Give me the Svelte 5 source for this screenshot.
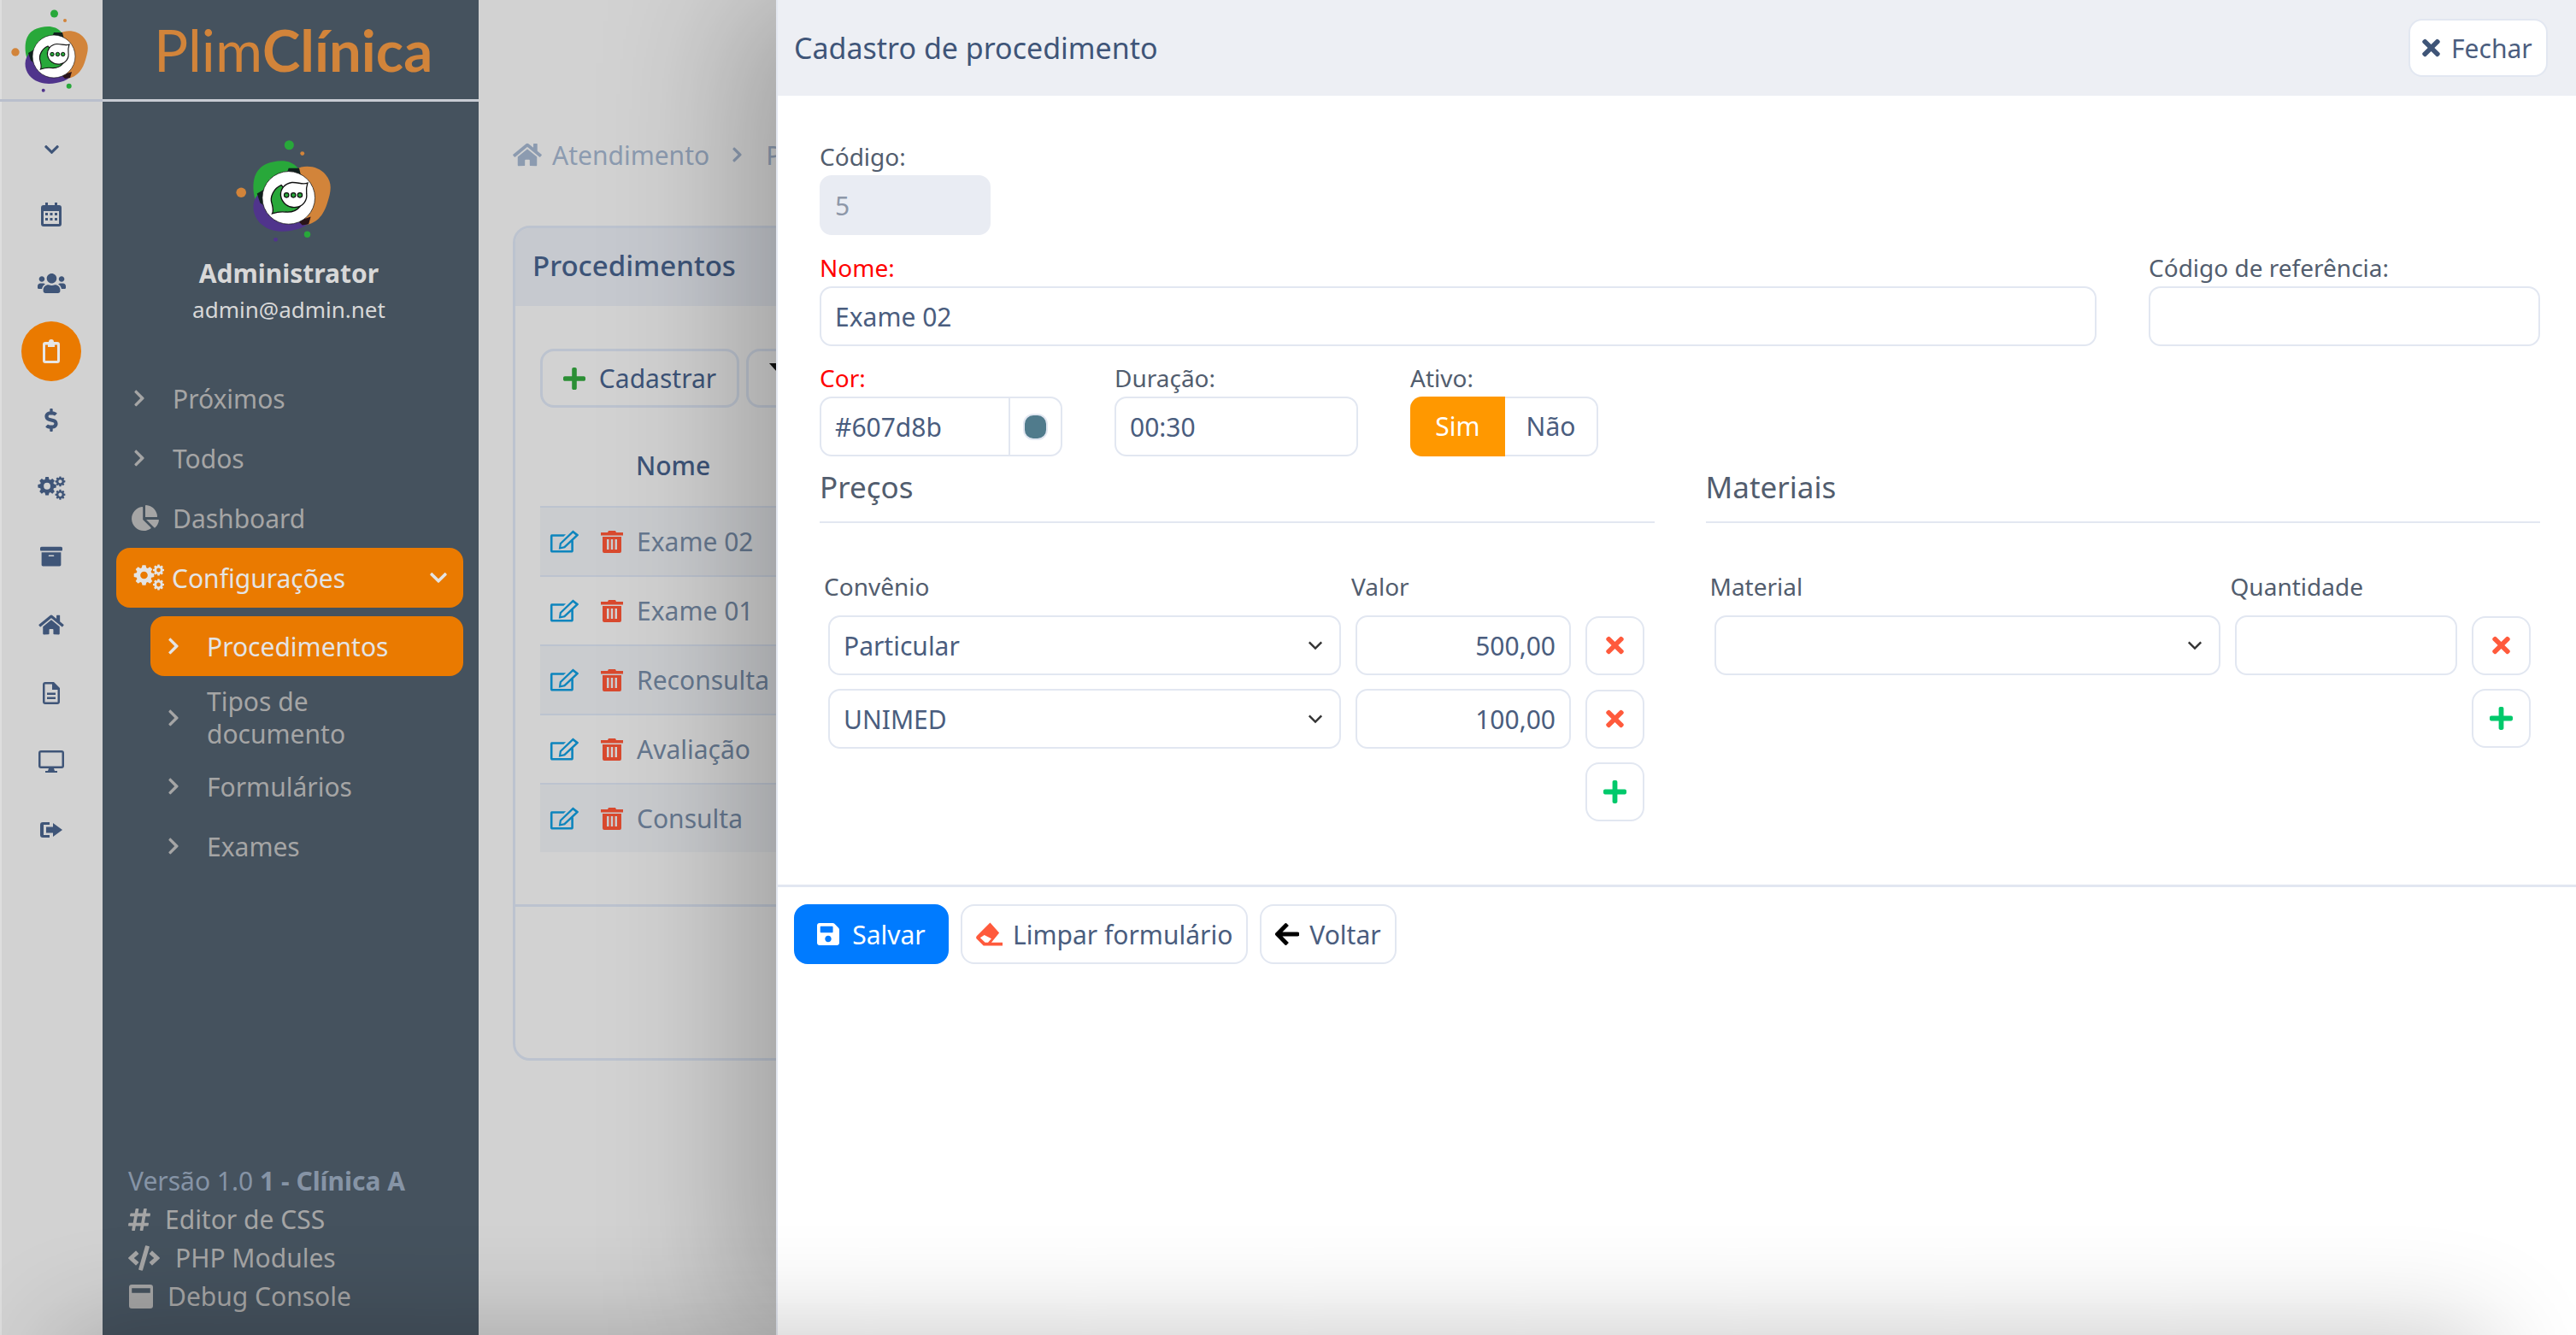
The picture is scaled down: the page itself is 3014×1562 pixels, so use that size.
<script>
  // font-awesome style glyphs, kept as { viewBox, path }
  const gearPath = (cx, cy, r) => {
    const pts = [];
    for (let i = 0; i < 8; i++) {
      const a = (i * Math.PI) / 4;
      for (const [off, rad] of [[-0.3, 0.76], [-0.17, 1], [0.17, 1], [0.3, 0.76]]) {
        pts.push(`${(cx + Math.cos(a + off) * rad * r).toFixed(1)} ${(cy + Math.sin(a + off) * rad * r).toFixed(1)}`);
      }
    }
    const h = r * 0.36;
    return `M${pts.join('L')}Z M${cx - h} ${cy}a${h} ${h} 0 1 0 ${h * 2} 0a${h} ${h} 0 1 0 ${-h * 2} 0Z`;
  };
  const gears = gearPath(12, 13, 12) + gearPath(29, 7, 6.6) + gearPath(29, 24, 6.6);

  const icons = {
    right: ['0 0 320 512', 'M285.476 272.971L91.132 467.314c-9.373 9.373-24.569 9.373-33.941 0l-22.667-22.667c-9.357-9.357-9.375-24.522-.04-33.901L188.505 256 34.484 101.255c-9.335-9.379-9.317-24.544.04-33.901l22.667-22.667c9.373-9.373 24.569-9.373 33.941 0L285.475 239.03c9.373 9.372 9.373 24.568.001 33.941z'],
    down: ['0 0 448 512', 'M207.029 381.476L12.686 187.132c-9.373-9.373-9.373-24.569 0-33.941l22.667-22.667c9.357-9.357 24.522-9.375 33.901-.04L224 284.505l154.745-154.021c9.379-9.335 24.544-9.317 33.901.04l22.667 22.667c9.373 9.373 9.373 24.569 0 33.941L240.971 381.476c-9.373 9.372-24.569 9.372-33.942 0z'],
    times: ['0 0 352 512', 'M242.72 256l100.07-100.07c12.28-12.28 12.28-32.19 0-44.48l-22.24-22.24c-12.28-12.28-32.19-12.28-44.48 0L176 189.28 75.93 89.21c-12.28-12.28-32.19-12.28-44.48 0L9.21 111.45c-12.28 12.28-12.28 32.19 0 44.48L109.28 256 9.21 356.07c-12.28 12.28-12.28 32.19 0 44.48l22.24 22.24c12.28 12.28 32.2 12.28 44.48 0L176 322.72l100.07 100.07c12.28 12.28 32.2 12.28 44.48 0l22.24-22.24c12.28-12.28 12.28-32.19 0-44.48L242.72 256z'],
    plus: ['0 0 448 512', 'M416 208H272V64c0-17.67-14.33-32-32-32h-32c-17.67 0-32 14.33-32 32v144H32c-17.67 0-32 14.33-32 32v32c0 17.67 14.33 32 32 32h144v144c0 17.67 14.33 32 32 32h32c17.67 0 32-14.33 32-32V304h144c17.67 0 32-14.33 32-32v-32c0-17.67-14.33-32-32-32z'],
    calendar: ['0 0 24 28', 'M5 0h3v3h8V0h3v3h2a3 3 0 0 1 3 3v19a3 3 0 0 1-3 3H3a3 3 0 0 1-3-3V6a3 3 0 0 1 3-3h2zM3 10v15h18V10zM5 12h3v3H5zM10.5 12h3v3h-3zM16 12h3v3h-3zM5 18h3v3H5zM10.5 18h3v3h-3zM16 18h3v3h-3z'],
    users: ['0 0 640 512', 'M96 224c35.3 0 64-28.7 64-64s-28.7-64-64-64-64 28.7-64 64 28.7 64 64 64zm448 0c35.3 0 64-28.7 64-64s-28.7-64-64-64-64 28.7-64 64 28.7 64 64 64zm32 32h-64c-17.6 0-33.5 7.1-45.1 18.6 40.3 22.1 68.9 62 75.1 109.4h66c17.7 0 32-14.3 32-32v-32c0-35.3-28.7-64-64-64zm-256 0c61.9 0 112-50.1 112-112S381.9 32 320 32 208 82.1 208 144s50.1 112 112 112zm76.8 32h-8.3c-20.8 10-43.9 16-68.5 16s-47.6-6-68.5-16h-8.3C179.6 288 128 339.6 128 403.2V432c0 26.5 21.5 48 48 48h288c26.5 0 48-21.5 48-48v-28.8c0-63.6-51.6-115.2-115.2-115.2zm-223.7-13.4C161.5 263.1 145.6 256 128 256H64c-35.3 0-64 28.7-64 64v32c0 17.7 14.3 32 32 32h65.9c6.3-47.4 34.9-87.3 75.2-109.4z'],
    clipboard: ['0 0 20 28', 'M10 0a3 3 0 0 1 3 3h4a3 3 0 0 1 3 3v19a3 3 0 0 1-3 3H3a3 3 0 0 1-3-3V6a3 3 0 0 1 3-3h4a3 3 0 0 1 3-3zM3 6.5v18a.5.5 0 0 0 .5.5h13a.5.5 0 0 0 .5-.5v-18h-3V9H6V6.5z'],
    dollar: ['0 0 288 512', 'M209.2 233.4l-108-31.6C88.7 198.2 80 186.5 80 173.5c0-16.3 13.2-29.5 29.5-29.5h66.3c12.2 0 24.2 3.7 34.2 10.5 6.1 4.1 14.3 3.1 19.5-2l34.8-34c7.1-6.9 6.1-18.4-1.8-24.5C238 74.8 207.4 64.1 176 64V16c0-8.8-7.2-16-16-16h-32c-8.8 0-16 7.2-16 16v48h-2.5C45.8 64-5.4 118.7.5 183.6c4.2 46.1 39.4 83.6 83.8 96.6l102.5 30c12.5 3.7 21.2 15.3 21.2 28.3 0 16.3-13.2 29.5-29.5 29.5h-66.3C100 368 88 364.3 78 357.5c-6.1-4.1-14.3-3.1-19.5 2l-34.8 34c-7.1 6.9-6.1 18.4 1.8 24.5 24.5 19.2 55.1 29.9 86.5 30v48c0 8.8 7.2 16 16 16h32c8.8 0 16-7.2 16-16v-48.2c46.6-.9 90.3-28.6 105.7-72.7 21.5-61.6-14.6-124.8-72.5-141.7z'],
    gears: ['0 0 36 32', gears],
    archive: ['0 0 512 512', 'M32 448c0 17.7 14.3 32 32 32h384c17.7 0 32-14.3 32-32V160H32v288zm160-212c0-6.6 5.4-12 12-12h104c6.6 0 12 5.4 12 12v8c0 6.6-5.4 12-12 12H204c-6.6 0-12-5.4-12-12v-8zM480 32H32C14.3 32 0 46.3 0 64v48c0 8.8 7.2 16 16 16h480c8.8 0 16-7.2 16-16V64c0-17.7-14.3-32-32-32z'],
    home: ['0 0 576 512', 'M280.37 148.26L96 300.11V464a16 16 0 0 0 16 16l112.06-.29a16 16 0 0 0 15.92-16V368a16 16 0 0 1 16-16h64a16 16 0 0 1 16 16v95.64a16 16 0 0 0 16 16.05L464 480a16 16 0 0 0 16-16V300L295.67 148.26a12.19 12.19 0 0 0-15.3 0zM571.6 251.47L488 182.56V44.05a12 12 0 0 0-12-12h-56a12 12 0 0 0-12 12v72.61L318.47 43a48 48 0 0 0-61 0L4.34 251.47a12 12 0 0 0-1.6 16.9l25.5 31A12 12 0 0 0 45.15 301l235.22-193.74a12.19 12.19 0 0 1 15.3 0L530.9 301a12 12 0 0 0 16.9-1.6l25.5-31a12 12 0 0 0-1.7-16.93z'],
    file: ['0 0 20 26', 'M3 0h10l7 7v16a3 3 0 0 1-3 3H3a3 3 0 0 1-3-3V3a3 3 0 0 1 3-3zM2.5 2.5v21h15V9H11V2.5zM5 12.5h10V15H5zM5 17.5h10V20H5z'],
    desktop: ['0 0 30 26', 'M3 0h24a3 3 0 0 1 3 3v15a3 3 0 0 1-3 3h-9l1 3h3v2H8v-2h3l1-3H3a3 3 0 0 1-3-3V3a3 3 0 0 1 3-3zM2.5 2.5v16h25v-16z'],
    exit: ['0 0 26 20', 'M3 1h8v3H4v12h7v3H3a3 3 0 0 1-3-3V4a3 3 0 0 1 3-3zM15 2l11 8-11 8v-4.5H7v-7h8z'],
    pie: ['0 0 544 512', 'M527.79 288H290.5l158.03 158.03c6.04 6.04 15.98 6.53 22.19.68 38.7-36.46 65.32-85.61 73.13-140.86 1.34-9.46-6.51-17.85-16.06-17.85zm-15.83-64.8C503.72 103.74 408.26 8.28 288.8.04 279.68-.59 272 7.1 272 16.24V240h223.77c9.14 0 16.82-7.68 16.19-16.8zM224 288V50.71c0-9.55-8.39-17.4-17.84-16.06C86.99 51.49-4.1 155.6.14 280.37 4.5 408.51 114.83 513.59 243.03 511.98c50.4-.63 96.97-16.87 135.26-44.03 7.9-5.6 8.42-17.23 1.57-24.08L224 288z'],
    hash: ['0 0 448 512', 'M440.667 182.109l7.143-40c1.313-7.355-4.342-14.109-11.813-14.109h-74.81l14.623-81.891C377.123 38.754 371.468 32 363.997 32h-40.632a12 12 0 0 0-11.813 9.891L296.175 128H197.54l14.623-81.891C213.477 38.754 207.822 32 200.35 32h-40.632a12 12 0 0 0-11.813 9.891L132.528 128H53.432a12 12 0 0 0-11.813 9.891l-7.143 40C33.163 185.246 38.818 192 46.289 192h74.81L98.242 320H19.146a12 12 0 0 0-11.813 9.891l-7.143 40C-1.123 377.246 4.532 384 12.003 384h74.81L72.19 465.891C70.877 473.246 76.532 480 84.003 480h40.632a12 12 0 0 0 11.813-9.891L151.826 384h98.634l-14.623 81.891C234.523 473.246 240.178 480 247.65 480h40.632a12 12 0 0 0 11.813-9.891L315.472 384h79.096a12 12 0 0 0 11.813-9.891l7.143-40c1.313-7.355-4.342-14.109-11.813-14.109h-74.81l22.857-128h79.096a12 12 0 0 0 11.813-9.891zM261.889 320h-98.634l22.857-128h98.634l-22.857 128z'],
    code: ['0 0 640 512', 'M278.9 511.5l-61-17.7c-6.4-1.8-10-8.5-8.2-14.9L346.2 8.7c1.8-6.4 8.5-10 14.9-8.2l61 17.7c6.4 1.8 10 8.5 8.2 14.9L293.8 503.3c-1.9 6.4-8.5 10.1-14.9 8.2zm-114-112.2l43.5-46.4c4.6-4.9 4.3-12.7-.8-17.2L117 256l90.6-79.7c5.1-4.5 5.5-12.3.8-17.2l-43.5-46.4c-4.5-4.8-12.1-5.1-17-.5L3.8 247.2c-5.1 4.7-5.1 12.8 0 17.5l144.1 135.1c4.9 4.6 12.5 4.4 17-.5zm327.2.6l144.1-135.1c5.1-4.7 5.1-12.8 0-17.5L492.1 112.1c-4.8-4.5-12.4-4.3-17 .5L431.6 159c-4.6 4.9-4.3 12.7.8 17.2L523 256l-90.6 79.7c-5.1 4.5-5.5 12.3-.8 17.2l43.5 46.4c4.5 4.9 12.1 5.1 17 .6z'],
    console: ['0 0 26 26', 'M3 0h20a3 3 0 0 1 3 3v20a3 3 0 0 1-3 3H3a3 3 0 0 1-3-3V3a3 3 0 0 1 3-3zM3 4v5h20V4z'],
    edit: ['0 0 34 26', 'M2.5 5H19l-2.5 2.5H4v15.5h21v-9l2.5-2.5V23a2.5 2.5 0 0 1-2.5 2.5H4A2.5 2.5 0 0 1 1.5 23V7a2.5 2.5 0 0 1 1-2zM27 .5l6 4.5a1 1 0 0 1 0 1.5L18 20.5l-7 1.5 1-7zM27 3.5L14 16l-.5 3.2 3.2-.7L30 6z'],
    trash: ['0 0 26 26', 'M9 0h8l1 2h8v3.500H0V2h8zM2 7h22v17a2 2 0 0 1-2 2H4a2 2 0 0 1-2-2zM7 10v12h2.500V10zM11.750 10v12h2.500V10zM16.500 10v12H19V10z'],
    save: ['0 0 448 512', 'M433.941 129.941l-83.882-83.882A48 48 0 0 0 316.118 32H48C21.49 32 0 53.49 0 80v352c0 26.51 21.49 48 48 48h352c26.51 0 48-21.51 48-48V163.882a48 48 0 0 0-14.059-33.941zM224 416c-35.346 0-64-28.654-64-64 0-35.346 28.654-64 64-64s64 28.654 64 64c0 35.346-28.654 64-64 64zm96-304.52V212c0 6.627-5.373 12-12 12H76c-6.627 0-12-5.373-12-12V108c0-6.627 5.373-12 12-12h228.52c3.183 0 6.235 1.264 8.485 3.515l3.48 3.48A11.996 11.996 0 0 1 320 111.48z'],
    eraser: ['0 0 32 28', 'M17 0l11 12.500-9.500 11.500H32v4H9L1 20a3 3 0 0 1 0-4zM10 15l-5 3.500 6 5.500h3.500l4-4.500z'],
    back: ['0 0 28 26', 'M13.500.6l2.400 2.400L8.500 10.500H26a2.500 2.500 0 0 1 0 5H8.500l7.400 7.500-2.400 2.400a1.500 1.500 0 0 1-2.100 0L.6 14.500a2 2 0 0 1 0-3L11.400.6a1.500 1.500 0 0 1 2.100 0z'],
  };

  const railIcons = [
    { name: 'down', w: 17, h: 20 },
    { name: 'calendar', w: 24, h: 28 },
    { name: 'users', w: 33, h: 27 },
    { name: 'clipboard', w: 20, h: 28, active: true },
    { name: 'dollar', w: 16, h: 27 },
    { name: 'gears', w: 33, h: 29 },
    { name: 'archive', w: 26, h: 26 },
    { name: 'home', w: 30, h: 26 },
    { name: 'file', w: 20, h: 26 },
    { name: 'desktop', w: 30, h: 26 },
    { name: 'exit', w: 26, h: 20 },
  ];
  const subItems = ['Tipos de documento', 'Formulários', 'Exames'];
  const procedures = ['Exame 02', 'Exame 01', 'Reconsulta', 'Avaliação', 'Consulta'];
  const prices = [
    { name: 'Particular', value: '500,00' },
    { name: 'UNIMED', value: '100,00' },
  ];
</script>

{#snippet icon(name, w, h)}
  <svg class="icon" width={w} height={h} viewBox={icons[name][0]} preserveAspectRatio="xMidYMid meet" aria-hidden="true">
    <path d={icons[name][1]} fill="currentColor" fill-rule="evenodd" />
  </svg>
{/snippet}

{#snippet logo(size)}
  <svg class="logo" width={size} height={size} viewBox="0 0 120 120" aria-hidden="true">
    <path d="M30 62C28 46 33 35 48 32C58 30 66 31 72 38L60 60L36 72C32 70 31 68 30 62Z" fill="#28a83a" />
    <path d="M70 39C78 34 92 36 98 44C105 52 103 60 100 70C97 80 92 90 78 92L60 60Z" fill="#d2843a" />
    <path d="M33 64C27 72 29 84 37 91C45 98 56 99 66 97C72 96 78 94 82 90L50 60Z" fill="#50348c" />
    <path d="M63 38L73 38L75 46L60 46Z" fill="#10201e" />
    <path d="M33 62L40 58L44 76L36 71Z" fill="#10201e" />
    <path d="M72 88L84 84L82 91L76 92Z" fill="#2a1418" />
    <circle cx="63" cy="66" r="25" fill="#fff" stroke="#111" stroke-width=".6" />
    <path d="M56 54C49 57 45 65 47 71C48 75 49 78 47.500 81C52 79.500 56 79 60 79.500C66 80 71 78 74 74Z" fill="#28a83a" stroke="#111" stroke-width="1.100" />
    <path d="M81 52C76 54 72 51 66 51.500C59 52.500 55 58 55.500 64C56.500 71 63 76 70 75C77 74 81 68 80 62C79.500 58 80 55 81 52Z" fill="#fff" stroke="#111" stroke-width="1.100" />
    <circle cx="61" cy="63.500" r="2.200" fill="#28a83a" stroke="#111" />
    <circle cx="67.500" cy="63.500" r="2.200" fill="#28a83a" stroke="#111" />
    <circle cx="73.700" cy="63.500" r="2.200" fill="#28a83a" stroke="#111" />
    <circle cx="63.500" cy="16" r="4.500" fill="#28a83a" />
    <circle cx="76" cy="24" r="2" fill="#d2843a" />
    <circle cx="18" cy="61" r="4.700" fill="#d2843a" />
    <circle cx="80.700" cy="100.700" r="3" fill="#28a83a" />
    <circle cx="50.700" cy="105.700" r="2" fill="#50348c" />
  </svg>
{/snippet}

{#snippet field(label, value, cls = '')}
  <div class="field {cls}">
    <span class="label" class:required={cls.includes('req')}>{label}</span>
    <input class="input" {value} readonly disabled={cls.includes('code')} />
  </div>
{/snippet}

{#snippet select(value)}
  <div class="select">
    <select class="input"><option>{value}</option></select>
    <svg class="caret" width="20" height="12" viewBox="0 0 16 10"><path d="M2 2l6 6 6-6" fill="none" stroke="#333" stroke-width="2" /></svg>
  </div>
{/snippet}

<div class="app">
  <nav class="rail">
    <div class="rail-logo">{@render logo(120)}</div>
    {#each railIcons as r}
      <div class="rail-item" class:active={r.active}>{@render icon(r.name, r.w, r.h)}</div>
    {/each}
  </nav>

  <aside class="sidebar">
    <div class="brand"><span class="plim">Plim</span><span class="clinica">Clínica</span></div>
    <div class="profile">
      {@render logo(148)}
      <strong>Administrator</strong>
      <span>admin@admin.net</span>
    </div>
    <ul class="menu">
      <li>{@render icon('right', 14, 22)}<span>Próximos</span></li>
      <li>{@render icon('right', 14, 22)}<span>Todos</span></li>
      <li class="pie">{@render icon('pie', 32, 30)}<span>Dashboard</span></li>
      <li class="open">{@render icon('gears', 37, 32)}<span>Configurações</span><span class="arrow">{@render icon('down', 20, 24)}</span></li>
      <li class="sub current">{@render icon('right', 14, 22)}<span>Procedimentos</span></li>
      {#each subItems as item}
        <li class="sub" class:two={item.length > 15}>{@render icon('right', 14, 22)}<span>{item}</span></li>
      {/each}
    </ul>
    <div class="side-foot">
      <div class="version">Versão 1.0 <b>1 - Clínica A</b></div>
      <div>{@render icon('hash', 26, 30)}<span class="t1">Editor de CSS</span></div>
      <div>{@render icon('code', 37, 30)}<span class="t2">PHP Modules</span></div>
      <div>{@render icon('console', 30, 28)}<span class="t3">Debug Console</span></div>
    </div>
  </aside>

  <main class="main">
    <div class="crumbs">{@render icon('home', 34, 30)}<span>Atendimento</span>{@render icon('right', 13, 20)}<span class="cut">P</span></div>
    <section class="card">
      <h2>Procedimentos</h2>
      <div class="card-body">
        <div class="toolbar">
          <button class="ghost">{@render icon('plus', 26, 30)}Cadastrar</button>
          <button class="ghost more"><i></i></button>
        </div>
        <div class="th">Nome</div>
        {#each procedures as p, i}
          <div class="tr" class:odd={i % 2 === 0}>
            <span class="edit">{@render icon('edit', 36, 27)}</span>
            <span class="trash">{@render icon('trash', 26, 28)}</span>
            <span>{p}</span>
          </div>
        {/each}
      </div>
      <div class="card-foot"></div>
    </section>

    <div class="panel">
      <header class="panel-head">
        <span>Cadastro de procedimento</span>
        <button class="btn">{@render icon('times', 21, 30)}Fechar</button>
      </header>
      <form class="form">
        {@render field('Código:', '5', 'code')}
        <div class="row name-row">
          {@render field('Nome:', 'Exame 02', 'req grow')}
          {@render field('Código de referência:', '', 'ref')}
        </div>
        <div class="row color-row">
          <div class="field">
            <span class="label required">Cor:</span>
            <div class="color">
              <input class="plain" value="#607d8b" readonly />
              <span class="swatch-box"><i></i></span>
            </div>
          </div>
          {@render field('Duração:', '00:30', 'time')}
          <div class="field">
            <span class="label">Ativo:</span>
            <div class="toggle"><span class="on">Sim</span><span class="off">Não</span></div>
          </div>
        </div>

        <div class="columns">
          <div class="col">
            <h3>Preços</h3>
            <div class="grid prices">
              <span class="label">Convênio</span><span class="label">Valor</span><span></span>
              {#each prices as row}
                {@render select(row.name)}
                <input class="input num" value={row.value} readonly />
                <button type="button" class="btn square del">{@render icon('times', 21, 30)}</button>
              {/each}
              <button type="button" class="btn square add last">{@render icon('plus', 27, 31)}</button>
            </div>
          </div>
          <div class="col">
            <h3>Materiais</h3>
            <div class="grid materials">
              <span class="label">Material</span><span class="label">Quantidade</span><span></span>
              {@render select('')}
              <input class="input num" value="" readonly />
              <button type="button" class="btn square del">{@render icon('times', 21, 30)}</button>
              <button type="button" class="btn square add last">{@render icon('plus', 27, 31)}</button>
            </div>
          </div>
        </div>
      </form>
      <footer class="panel-foot">
        <button class="btn primary">{@render icon('save', 26, 30)}Salvar</button>
        <button class="btn">{@render icon('eraser', 31, 28)}Limpar formulário</button>
        <button class="btn">{@render icon('back', 28, 26)}Voltar</button>
      </footer>
    </div>
  </main>
  <div class="edge-shade"></div>
</div>

<style>
  :global(body) {
    margin: 0;
    background: #d2d2d2;
  }
  .app {
    position: relative;
    display: flex;
    height: 100vh;
    overflow: hidden;
    font-family: "Noto Sans", sans-serif;
    font-size: 30px;
    color: #4a5d7e;
  }
  .icon,
  .logo {
    display: block;
    flex: none;
  }

  /* icon rail */
  .rail {
    width: 120px;
    flex: none;
    display: flex;
    flex-direction: column;
    align-items: center;
    background: #d2d2d2;
    box-shadow: inset 2px 0 #dedede;
    color: #3f5578;
  }
  .rail-logo {
    width: 120px;
    height: 116px;
    border-bottom: 3px solid #b9bfcc;
    margin-bottom: 17px;
    overflow: hidden;
  }
  .rail-item {
    width: 70px;
    height: 70px;
    margin-bottom: 10px;
    display: flex;
    align-items: center;
    justify-content: center;
  }
  .rail-logo + .rail-item :global(svg) {
    margin-top: 8px;
  }
  .rail-item.active {
    border-radius: 50%;
    background: #ea7a00;
    color: #e6e6e6;
  }

  /* sidebar */
  .sidebar {
    width: 440px;
    flex: none;
    display: flex;
    flex-direction: column;
    background: #45525e;
    color: #a5a5a5;
  }
  .brand {
    height: 116px;
    border-bottom: 3px solid #c8ccd4;
    padding-left: 60px;
    line-height: 116px;
    font-family: Lato, sans-serif;
    font-size: 67px;
    color: #d2843a;
  }
  .plim {
    font-weight: 400;
  }
  .clinica {
    font-weight: 700;
  }
  .profile {
    display: flex;
    flex-direction: column;
    align-items: center;
    padding-top: 31px;
    margin-right: 4px;
    height: 281px;
  }
  .profile :global(.logo) {
    margin-left: -9px;
  }
  .profile strong {
    margin-top: 1px;
    font-size: 30px;
    line-height: 42px;
    color: #d8d8d8;
  }
  .profile span {
    font-size: 26px;
    line-height: 42px;
    color: #d8d8d8;
  }
  .menu {
    list-style: none;
    margin: 0;
    padding: 0;
  }
  .menu li {
    display: flex;
    align-items: center;
    height: 70px;
    margin-left: 16px;
    margin-right: 18px;
    padding-left: 20px;
    border-radius: 16px;
  }
  .menu li > span:first-of-type {
    margin-left: 32px;
  }
  .menu li.pie :global(svg) {
    margin-left: -2px;
  }
  .menu li.pie > span:first-of-type {
    margin-left: 16px;
  }
  .menu li.open {
    background: #ea7a00;
    color: #e4e4e4;
  }
  .menu li.open > span:first-of-type {
    margin-left: 8px;
  }
  .arrow {
    margin-left: auto;
    margin-right: 19px;
  }
  .menu li.sub {
    margin-left: 56px;
  }
  .menu li.current {
    background: #ea7a00;
    color: #e4e4e4;
    margin-top: 10px;
  }
  .menu li.two {
    height: 91px;
    margin-top: 3px;
    line-height: 38px;
    padding-right: 60px;
  }
  .side-foot {
    margin-top: auto;
    padding: 0 0 23px 30px;
    font-size: 30px;
    line-height: 45px;
  }
  .side-foot div {
    display: flex;
    align-items: center;
    height: 45px;
  }
  .version {
    color: #8694a6;
    display: block !important;
  }
  .t1 { margin-left: 17px; }
  .t2 { margin-left: 18px; }
  .t3 { margin-left: 16px; }

  /* page behind the panel */
  .main {
    position: relative;
    flex: 1;
    min-width: 0;
    padding: 160px 0 0 40px;
    background: #d2d2d2;
    overflow: hidden;
  }
  .crumbs {
    display: flex;
    align-items: center;
    height: 42px;
    white-space: nowrap;
    color: #8c9bb0;
  }
  .crumbs span:first-of-type {
    margin: 0 26px 0 12px;
  }
  .cut {
    margin-left: 27px;
  }
  .card {
    width: 1100px;
    height: 977px;
    margin-top: 62px;
    box-sizing: border-box;
    border: 3px solid #bcc3cf;
    border-radius: 20px;
    display: flex;
    flex-direction: column;
  }
  .card h2 {
    margin: 0;
    height: 91px;
    padding-left: 20px;
    flex: none;
    background: #c6c9cf;
    border-radius: 17px 17px 0 0;
    font-size: 33px;
    font-weight: 500;
    line-height: 87px;
    color: #3d5478;
  }
  .card-body {
    flex: 1;
    padding: 50px 0 0 29px;
  }
  .toolbar {
    display: flex;
    gap: 8px;
  }
  .ghost {
    width: 233px;
    height: 69px;
    display: flex;
    align-items: center;
    justify-content: center;
    gap: 16px;
    border: 3px solid #bcc3cf;
    border-radius: 16px;
    background: transparent;
    font: inherit;
    color: #3d5478;
  }
  .ghost :global(svg) {
    color: #2b8f35;
  }
  .more {
    align-items: flex-start;
    justify-content: flex-start;
    padding: 14px 0 0 24px;
  }
  .more i {
    width: 0;
    height: 0;
    border: 9px solid transparent;
    border-top: 10px solid #111;
    border-bottom: 0;
  }
  .th {
    height: 115px;
    line-height: 135px;
    padding-left: 112px;
    font-weight: 500;
    color: #3d5478;
  }
  .tr {
    height: 79px;
    display: flex;
    align-items: center;
    padding-left: 10px;
    border-top: 2px solid #bcc3cf;
    color: #66788f;
  }
  .tr.odd {
    background: #cacccf;
  }
  .edit {
    color: #0e85bd;
    margin-right: 25px;
  }
  .trash {
    color: #d94a2f;
    margin-right: 16px;
  }
  .card-foot {
    height: 177px;
    border-top: 3px solid #bcc3cf;
    flex: none;
  }

  /* modal panel */
  .panel {
    position: absolute;
    top: 0;
    right: 0;
    bottom: 0;
    width: 2106px;
    box-sizing: border-box;
    background: #fff;
    border-left: 2px solid #e3e7f0;
    box-shadow: -40px 0 150px rgba(0, 0, 0, 0.25);
  }
  .panel-head {
    height: 112px;
    box-sizing: border-box;
    display: flex;
    align-items: center;
    justify-content: space-between;
    padding: 0 33px 0 19px;
    background: #edeff4;
    font-size: 34px;
    color: #3f5578;
  }
  .form {
    height: 926px;
    box-sizing: border-box;
    padding: 54px 42px 0 49px;
    border-bottom: 3px solid #e2e7f1;
  }
  .label {
    display: block;
    height: 39px;
    line-height: 34px;
    font-size: 28px;
    color: #525d6e;
    white-space: nowrap;
  }
  .label.required {
    color: #f00;
  }
  .input {
    display: block;
    width: 100%;
    height: 70px;
    box-sizing: border-box;
    padding: 0 16px;
    border: 2px solid #e2e7f1;
    border-radius: 14px;
    background: #fff;
    font: inherit;
    color: #4a5d7e;
    outline: none;
  }
  .field {
    flex: none;
  }
  .field.code {
    width: 200px;
  }
  .field.code .input {
    background: #e9ecf3;
    color: #8d97a8;
    border-color: #e9ecf3;
  }
  .field.grow {
    flex: 1;
  }
  .field.ref {
    width: 458px;
  }
  .field.time {
    width: 285px;
  }
  .row {
    display: flex;
    margin-top: 21px;
  }
  .name-row {
    gap: 61px;
  }
  .color-row {
    gap: 61px;
    margin-top: 20px;
  }
  .color {
    display: flex;
    width: 284px;
    height: 70px;
    box-sizing: border-box;
    border: 2px solid #e2e7f1;
    border-radius: 14px;
  }
  .plain {
    flex: 1;
    min-width: 0;
    padding: 0 16px;
    border: 0;
    border-right: 2px solid #e2e7f1;
    background: transparent;
    font: inherit;
    color: #4a5d7e;
    outline: none;
  }
  .swatch-box {
    width: 59px;
    display: flex;
    align-items: center;
    justify-content: center;
  }
  .swatch-box i {
    width: 25px;
    height: 27px;
    border-radius: 12px;
    background: #507b8c;
    border: 2px solid #e2e7f1;
  }
  .toggle {
    display: flex;
    width: 220px;
    height: 70px;
    box-sizing: border-box;
    border: 2px solid #e2e7f1;
    border-radius: 14px;
    line-height: 66px;
    text-align: center;
  }
  .toggle .on {
    width: 111px;
    margin: -2px 0 -2px -2px;
    line-height: 70px;
    background: #ff9800;
    border-radius: 14px 0 0 14px;
    color: #fff;
  }
  .toggle .off {
    flex: 1;
  }
  .columns {
    display: flex;
    gap: 60px;
  }
  .col {
    flex: 1;
    min-width: 0;
  }
  .col h3 {
    margin: 0;
    height: 76px;
    border-bottom: 2px solid #e2e7f1;
    font-size: 35px;
    font-weight: 400;
    line-height: 72px;
    color: #525d6e;
  }
  .grid {
    display: grid;
    row-gap: 16px;
    column-gap: 17px;
    padding: 57px 0 0 10px;
    align-items: center;
  }
  .grid .label {
    margin-left: -5px;
    height: 35px;
  }
  .prices {
    grid-template-columns: 600px 252px 69px;
  }
  .materials {
    grid-template-columns: 592px 260px 69px;
  }
  .num {
    text-align: right;
  }
  .select {
    position: relative;
  }
  .select select {
    appearance: none;
  }
  .caret {
    position: absolute;
    right: 20px;
    top: 29px;
  }
  .btn {
    height: 70px;
    box-sizing: border-box;
    display: inline-flex;
    align-items: center;
    gap: 12px;
    padding: 0 16px;
    border: 2px solid #e2e7f1;
    border-radius: 16px;
    background: #fff;
    font: inherit;
    color: #4a5d7e;
  }
  .panel-head .btn {
    height: 68px;
    width: 163px;
    gap: 13px;
    padding: 0 14px;
    font-size: 30px;
  }
  .panel-head .btn :global(svg) {
    color: #3f5578;
  }
  .square {
    width: 69px;
    height: 69px;
    padding: 0;
    justify-content: center;
  }
  .del {
    color: #ff5a3c;
  }
  .add {
    color: #00c96b;
  }
  .last {
    grid-column: 3;
  }
  .panel-foot {
    display: flex;
    gap: 14px;
    padding: 20px 0 0 19px;
  }
  .panel-foot .btn :global(svg) {
    color: #000;
  }
  .panel-foot .btn:nth-child(2) :global(svg) {
    color: #ff5a3c;
  }
  .primary {
    width: 181px;
    justify-content: center;
    background: #007bff;
    border-color: #007bff;
    color: #fff;
    gap: 15px;
  }
  .panel-foot .primary :global(svg) {
    color: #fff;
  }
  /* soft window shadow along the bottom edge */
  .edge-shade {
    position: absolute;
    left: 70px;
    right: 104px;
    bottom: -200px;
    height: 200px;
    pointer-events: none;
    box-shadow: 0 0 128px rgba(0, 0, 0, 0.24);
  }
</style>
